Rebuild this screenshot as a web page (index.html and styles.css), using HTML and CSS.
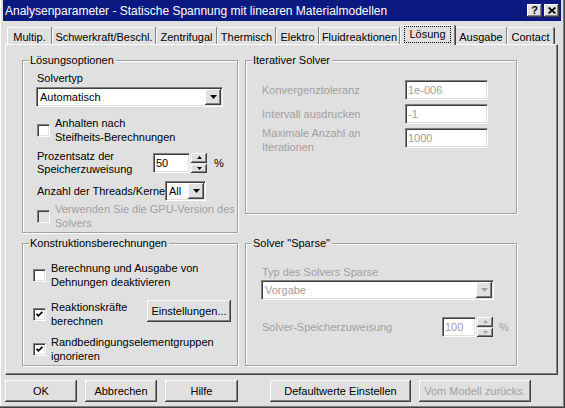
FILE: index.html
```
<!DOCTYPE html>
<html>
<head>
<meta charset="utf-8">
<link rel="stylesheet" href="styles.css">
</head>
<body>
<div class="window">
  <div class="titlebar">
    <span class="title">Analysenparameter - Statische Spannung mit linearen Materialmodellen</span>
    <div class="tb-btns">
      <span class="tb-btn">?</span>
      <span class="tb-btn"><svg width="8" height="7" viewBox="0 0 8 7"><path d="M0.6 0.5 L7.4 6.5 M7.4 0.5 L0.6 6.5" stroke="#000" stroke-width="1.7" fill="none"/></svg></span>
    </div>
  </div>

  <div class="tabs">
    <div class="tab t1">Multip.</div>
    <div class="tab t2">Schwerkraft/Beschl.</div>
    <div class="tab t3">Zentrifugal</div>
    <div class="tab t4">Thermisch</div>
    <div class="tab t5">Elektro</div>
    <div class="tab t6">Fluidreaktionen</div>
    <div class="tab t7 sel"><span class="focus">Lösung</span></div>
    <div class="tab t8">Ausgabe</div>
    <div class="tab t9">Contact</div>
  </div>

  <div class="panel">
    <div class="content">
      <div class="group g1">
        <span class="legend">Lösungsoptionen</span>
        <div class="gbody">
          <span class="lbl solvertyp">Solvertyp</span>
          <div class="select sel-solver"><span class="val">Automatisch</span><span class="arrow"><svg width="7" height="4" viewBox="0 0 7 4"><path d="M0 0h7L3.5 4z" fill="#000"/></svg></span></div>
          <div class="cbrow r-anhalten">
            <span class="cb"></span>
            <span class="lbl">Anhalten nach<br>Steifheits-Berechnungen</span>
          </div>
          <div class="row r-prozent">
            <span class="lbl lh13 w-prozent">Prozentsatz der<br>Speicherzuweisung</span>
            <div class="input in-50">50</div>
            <div class="spin"><span><svg width="5" height="3" viewBox="0 0 5 3"><path d="M0 3h5L2.5 0z" fill="#000"/></svg></span><span><svg width="5" height="3" viewBox="0 0 5 3"><path d="M0 0h5L2.5 3z" fill="#000"/></svg></span></div>
            <span class="pct">%</span>
          </div>
          <div class="row r-threads">
            <span class="lbl w-threads">Anzahl der Threads/Kerne</span>
            <div class="select sel-all"><span class="val">All</span><span class="arrow"><svg width="7" height="4" viewBox="0 0 7 4"><path d="M0 0h7L3.5 4z" fill="#000"/></svg></span></div>
          </div>
          <div class="cbrow r-gpu">
            <span class="cb cb-dis"></span>
            <span class="lbl dis">Verwenden Sie die GPU-Version des<br>Solvers</span>
          </div>
        </div>
      </div>

      <div class="group g3">
        <span class="legend">Iterativer Solver</span>
        <div class="gbody">
          <div class="row r-it1">
            <span class="lbl dis w-it">Konvergenztoleranz</span>
            <div class="input in-it dis">1e-006</div>
          </div>
          <div class="row r-it2">
            <span class="lbl dis w-it">Intervall ausdrucken</span>
            <div class="input in-it dis">-1</div>
          </div>
          <div class="row r-it3">
            <span class="lbl dis w-it two">Maximale Anzahl an<br>Iterationen</span>
            <div class="input in-it dis">1000</div>
          </div>
        </div>
      </div>

      <div class="group g2">
        <span class="legend">Konstruktionsberechnungen</span>
        <div class="gbody">
          <div class="cbrow r-k1">
            <span class="cb"></span>
            <span class="lbl">Berechnung und Ausgabe von<br>Dehnungen deaktivieren</span>
          </div>
          <div class="cbrow r-k2">
            <span class="cb"><svg width="7" height="7" viewBox="0 0 7 7"><path d="M0.6 2.8 L2.4 4.8 L6.4 0.8" stroke="#000" stroke-width="1.8" fill="none"/></svg></span>
            <span class="lbl">Reaktionskräfte<br>berechnen</span>
            <span class="btn btn-einst">Einstellungen...</span>
          </div>
          <div class="cbrow r-k3">
            <span class="cb"><svg width="7" height="7" viewBox="0 0 7 7"><path d="M0.6 2.8 L2.4 4.8 L6.4 0.8" stroke="#000" stroke-width="1.8" fill="none"/></svg></span>
            <span class="lbl">Randbedingungselementgruppen<br>ignorieren</span>
          </div>
        </div>
      </div>

      <div class="group g4">
        <span class="legend">Solver "Sparse"</span>
        <div class="gbody">
          <span class="lbl dis typ">Typ des Solvers Sparse</span>
          <div class="select sel-sparse"><span class="val dis">Vorgabe</span><span class="arrow"><svg width="7" height="4" viewBox="0 0 7 4"><path d="M0 0h7L3.5 4z" fill="#a0a0a0"/></svg></span></div>
          <div class="row r-sp">
            <span class="lbl dis w-sp">Solver-Speicherzuweisung</span>
            <div class="input in-100 dis">100</div>
            <div class="spin"><span><svg width="5" height="3" viewBox="0 0 5 3"><path d="M0 3h5L2.5 0z" fill="#a0a0a0"/></svg></span><span><svg width="5" height="3" viewBox="0 0 5 3"><path d="M0 0h5L2.5 3z" fill="#a0a0a0"/></svg></span></div>
            <span class="pct dis">%</span>
          </div>
        </div>
      </div>
    </div>
  </div>

  <div class="buttons">
    <span class="btn b-ok">OK</span>
    <span class="btn b-abb">Abbrechen</span>
    <span class="btn b-hilfe">Hilfe</span>
    <span class="btn b-def">Defaultwerte Einstellen</span>
    <span class="btn b-vom dis">Vom Modell zurücks.</span>
  </div>
</div>
</body>
</html>
```
FILE: styles.css
```
* { box-sizing: border-box; }
body { margin: 0; background: #e0e0e0; }

.window {
  width: 565px;
  height: 408px;
  background: #e0e0e0;
  padding: 0 4px 2px 3px;
  font: 11px "Liberation Sans", Arial, sans-serif;
  color: #000;
  display: flex;
  flex-direction: column;
  box-shadow: inset -1px -1px 0 #404040, inset -2px -2px 0 #808080, inset 1px 0 0 #fff;
  overflow: hidden;
}

/* title bar */
.titlebar {
  height: 21px;
  flex: none;
  background: #0a1a80;
  color: #fff;
  display: flex;
  align-items: center;
  justify-content: space-between;
  padding: 0 2px 0 2px;
}
.title { font-size: 12px; line-height: 14px; white-space: nowrap; }
.tb-btns { display: flex; gap: 2px; }
.tb-btn {
  width: 15px;
  height: 13px;
  background: #e0e0e0;
  color: #000;
  font-weight: bold;
  font-size: 11px;
  line-height: 11px;
  display: flex;
  align-items: center;
  justify-content: center;
  box-shadow: inset -1px -1px 0 #404040, inset 1px 1px 0 #fff, inset -2px -2px 0 #808080;
}
.tb-btn svg { display: block; }

/* tabs */
.tabs {
  display: flex;
  align-items: flex-end;
  height: 19px;
  margin-top: 4px;
  padding-left: 4px;
  flex: none;
}
.tab {
  height: 17px;
  display: flex;
  align-items: center;
  justify-content: center;
  padding-top: 1px;
  border-top: 1px solid #fff;
  border-left: 1px solid #fff;
  border-right: 1px solid #808080;
  border-radius: 2px 2px 0 0;
  box-shadow: 1px 0 0 #404040;
  white-space: nowrap;
  flex: none;
}
.t1 { width: 45px; }
.t2 { width: 104px; }
.t3 { width: 61px; }
.t4 { width: 59px; }
.t5 { width: 43px; }
.t6 { width: 81px; }
.t7 { width: 55px; }
.t8 { width: 52px; }
.t9 { width: 47px; }
.tab.sel {
  height: 20px;
  margin-bottom: -1px;
  position: relative;
  z-index: 1;
  background: #e0e0e0;
  padding: 0 3px 2px 3px;
}
.focus {
  display: block;
  width: 100%;
  border: 1px dotted #000;
  text-align: center;
  line-height: 15px;
}

/* panel */
.panel {
  flex: none;
  height: 331px;
  margin: 0 3px 0 2px;
  border-top: 1px solid #fff;
  border-left: 1px solid #fff;
  border-right: 1px solid #404040;
  border-bottom: 1px solid #404040;
  box-shadow: inset -1px -1px 0 #808080;
  padding: 15px 0 0 16px;
}
.content {
  display: grid;
  grid-template-columns: 216px 272px;
  grid-template-rows: 173px 123px;
  column-gap: 7px;
  row-gap: 10px;
}

/* group boxes */
.group {
  border: 1px solid #a0a0a0;
  box-shadow: inset 1px 1px 0 #fff, 1px 1px 0 #fff;
  display: flex;
  flex-direction: column;
}
.g3 { align-self: start; height: 154px; }
.legend {
  align-self: flex-start;
  margin: -7px 0 0 6px;
  padding: 0 2px 0 1px;
  background: #e0e0e0;
  line-height: 13px;
  height: 13px;
  white-space: nowrap;
}
.gbody { display: flex; flex-direction: column; }
.g1 .gbody { padding-left: 14px; }
.g2 .gbody { padding: 0 6px 0 10px; }
.g3 .gbody, .g4 .gbody { padding-left: 16px; }

.lbl { line-height: 14px; white-space: nowrap; }
.lh13 { line-height: 13px; }
.dis { color: #a0a0a0; }

.row { display: flex; align-items: center; }
.cbrow { display: flex; align-items: center; gap: 5px; }

/* checkbox */
.cb {
  width: 13px;
  height: 13px;
  flex: none;
  background: #fff;
  border: 1px solid;
  border-color: #808080 #fff #fff #808080;
  box-shadow: inset 1px 1px 0 #404040, inset -1px -1px 0 #e0e0e0;
  display: flex;
  align-items: center;
  justify-content: center;
}
.cb svg { display: block; }
.cb-dis { background: #e0e0e0; }

/* select */
.select {
  height: 20px;
  background: #fff;
  border: 1px solid;
  border-color: #808080 #fff #fff #808080;
  box-shadow: inset 1px 1px 0 #404040, inset -1px -1px 0 #e0e0e0;
  display: flex;
  align-items: center;
  padding: 0 1px 0 3px;
}
.select .val { flex: 1; white-space: nowrap; }
.arrow {
  width: 16px;
  height: 16px;
  flex: none;
  background: #e0e0e0;
  box-shadow: inset -1px -1px 0 #404040, inset 1px 1px 0 #fff, inset -2px -2px 0 #808080;
  display: flex;
  align-items: center;
  justify-content: center;
}
.arrow svg { display: block; }

/* input */
.input {
  height: 20px;
  background: #fff;
  border: 1px solid;
  border-color: #808080 #fff #fff #808080;
  box-shadow: inset 1px 1px 0 #404040, inset -1px -1px 0 #e0e0e0;
  padding: 0 2px;
  display: flex;
  align-items: center;
  flex: none;
}

/* spinner */
.spin {
  width: 16px;
  height: 20px;
  margin-left: 1px;
  display: flex;
  flex-direction: column;
  gap: 1px;
  flex: none;
}
.spin span {
  flex: 1;
  background: #e0e0e0;
  box-shadow: inset -1px -1px 0 #404040, inset 1px 1px 0 #fff, inset -2px -2px 0 #808080;
  display: flex;
  align-items: center;
  justify-content: center;
}
.spin svg { display: block; }
.pct { margin-left: 7px; }

/* buttons */
.btn {
  height: 22px;
  display: flex;
  align-items: center;
  justify-content: center;
  background: #e0e0e0;
  box-shadow: inset -1px -1px 0 #404040, inset 1px 1px 0 #fff, inset -2px -2px 0 #808080;
  white-space: nowrap;
  flex: none;
}

/* group 1 layout */
.solvertyp { margin-top: 4px; }
.sel-solver { margin-top: 2px; margin-left: -1px; width: 187px; }
.r-anhalten { margin-top: 9px; }
.r-prozent { margin-top: 6px; }
.w-prozent { width: 116px; }
.in-50 { width: 37px; }
.r-threads { margin-top: 5px; }
.w-threads { width: 128px; }
.sel-all { width: 41px; }
.r-gpu { margin-top: 1px; }

/* group 3 layout */
.r-it1 { margin-top: 13px; }
.r-it2, .r-it3 { margin-top: 4px; }
.w-it { width: 143px; }
.in-it { width: 83px; }
.r-it3 { align-items: flex-start; }
.two { margin-top: -2px; }

/* group 2 layout */
.r-k1 { margin-top: 11px; }
.r-k2 { margin-top: 11px; }
.btn-einst { width: 84px; margin-left: auto; align-self: flex-start; }
.r-k3 { margin-top: 7px; }

/* group 4 layout */
.typ { margin-top: 15px; }
.sel-sparse { margin-top: 1px; margin-left: -1px; width: 233px; }
.r-sp { margin-top: 17px; }
.w-sp { width: 180px; }
.in-100 { width: 34px; }
.r-sp .pct { margin-left: 6px; }

/* bottom buttons */
.buttons {
  display: flex;
  gap: 8px;
  margin-top: 5px;
  padding-left: 2px;
  flex: none;
}
.b-ok { width: 72px; }
.b-abb { width: 72px; }
.b-hilfe { width: 73px; }
.b-def { width: 141px; margin-left: 24px; }
.b-vom { width: 112px; }
```
